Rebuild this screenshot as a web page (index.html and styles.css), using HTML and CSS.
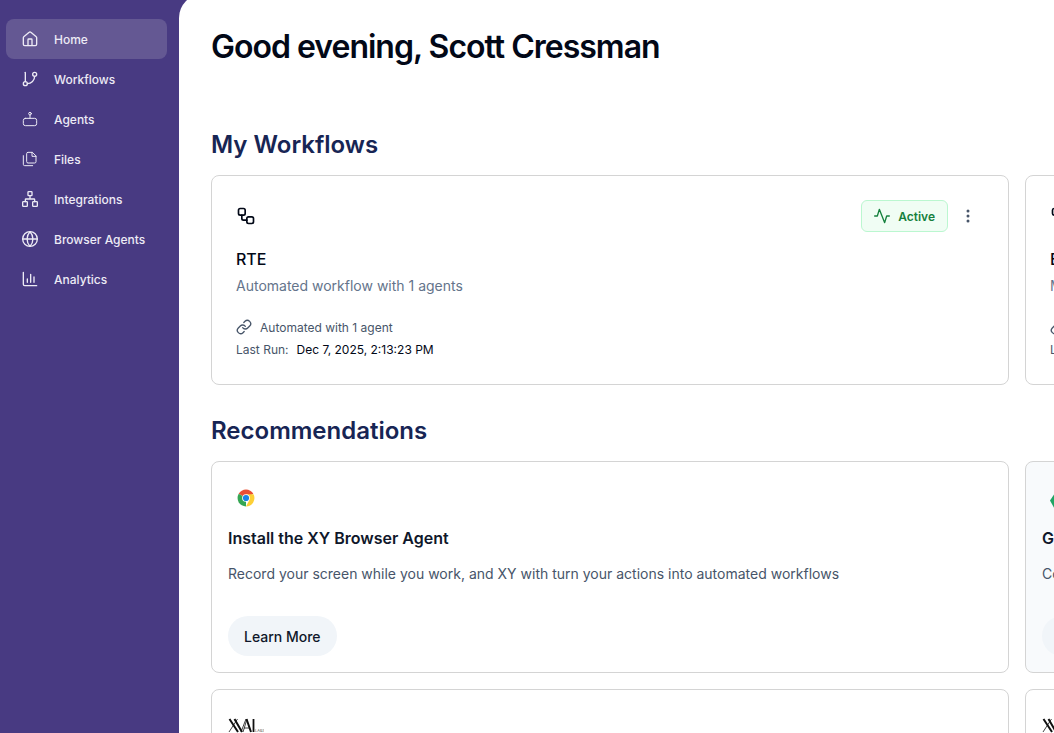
FILE: index.html
```html
<!DOCTYPE html>
<html lang="en">
<head>
    <meta charset="UTF-8">
    <meta name="viewport" content="width=device-width, initial-scale=1.0">
    <title>Home</title>
    <link rel="stylesheet" href="styles.css">
</head>
<body>
    <!-- Shared icons -->
    <svg class="sprite" aria-hidden="true">
        <symbol id="workflow" viewBox="0 0 24 24">
            <rect x="3" y="3" width="8" height="8" rx="2"/>
            <path d="M7 11v4a2 2 0 0 0 2 2h4"/>
            <rect x="13" y="13" width="8" height="8" rx="2"/>
        </symbol>
        <symbol id="link" viewBox="0 0 24 24">
            <path d="M10 13a5 5 0 0 0 7.54.54l3-3a5 5 0 0 0-7.07-7.07l-1.72 1.71"/>
            <path d="M14 11a5 5 0 0 0-7.54-.54l-3 3a5 5 0 0 0 7.07 7.07l1.71-1.71"/>
        </symbol>
        <symbol id="xyai" viewBox="0 0 36 16">
            <g fill="none" stroke="#111">
                <path d="M1.5 1L10 14M6.500 1L14 14M18.500 1L23 14" stroke-width="2"/>
                <path d="M9.500 1L1 14M18 1L13 14M19 1L15 14M16 10h6" stroke-width=".8"/>
                <path d="M25.500 1v13" stroke-width="1.800"/>
            </g>
            <text x="27" y="14" font-size="4" fill="#555">LABS</text>
        </symbol>
    </svg>

    <div class="layout">
        <nav class="sidebar">
            <a href="#" class="nav-item active">
                <svg class="icon" viewBox="0 0 24 24"><path d="M15 21v-8a1 1 0 0 0-1-1h-4a1 1 0 0 0-1 1v8"/><path d="M2 10a2 2 0 0 1 .7-1.5l8-6.500a2 2 0 0 1 2.600 0l8 6.500A2 2 0 0 1 22 10v10a2 2 0 0 1-2 2H4a2 2 0 0 1-2-2z"/></svg>
                Home
            </a>
            <a href="#" class="nav-item">
                <svg class="icon" viewBox="0 0 24 24"><path d="M5 2v14"/><circle cx="19" cy="5" r="3"/><circle cx="5" cy="19" r="3"/><path d="M19 8a11 11 0 0 1-11 11"/></svg>
                Workflows
            </a>
            <a href="#" class="nav-item">
                <svg class="icon thin" viewBox="0 0 24 24"><rect x="2" y="11" width="20" height="11" rx="3"/><circle cx="12" cy="4" r="2"/><path d="M12 6v5"/></svg>
                Agents
            </a>
            <a href="#" class="nav-item">
                <svg class="icon thin" viewBox="0 0 24 24"><path d="M15 2H9a2 2 0 0 0-2 2v12a2 2 0 0 0 2 2h10a2 2 0 0 0 2-2V8z"/><path d="M15 2v6h6"/><path d="M2 7v13a2 2 0 0 0 2 2h12"/></svg>
                Files
            </a>
            <a href="#" class="nav-item">
                <svg class="icon" viewBox="0 0 24 24"><rect x="16" y="16" width="7" height="7" rx="1"/><rect x="1" y="16" width="7" height="7" rx="1"/><rect x="9" y="1" width="6" height="6" rx="1"/><path d="M5 16v-3a1 1 0 0 1 1-1h12a1 1 0 0 1 1 1v3M12 12V7"/></svg>
                Integrations
            </a>
            <a href="#" class="nav-item">
                <svg class="icon" viewBox="0 0 24 24"><circle cx="12" cy="12" r="11"/><path d="M12 1a16 16 0 0 0 0 22 16 16 0 0 0 0-22M1 12h22"/></svg>
                Browser Agents
            </a>
            <a href="#" class="nav-item">
                <svg class="icon" viewBox="0 0 24 24"><path d="M2 2v18a2 2 0 0 0 2 2h18M8 17v-5M13 17V5M18 17V9"/></svg>
                Analytics
            </a>
        </nav>

        <main class="main">
            <h1>Good evening, Scott Cressman</h1>

            <section>
                <h2>My Workflows</h2>
                <div class="grid">
                    <article class="card workflow-card">
                        <div class="card-top">
                            <svg class="icon card-icon"><use href="#workflow"/></svg>
                            <div class="card-actions">
                                <span class="badge">
                                    <svg class="icon" viewBox="0 0 24 24"><path d="M23 12h-4l-3 10L8 2l-3 10H1"/></svg>
                                    Active
                                </span>
                                <button class="menu-button" aria-label="More options">
                                    <svg viewBox="0 0 16 16"><circle cx="8" cy="3" r="1.5"/><circle cx="8" cy="8" r="1.5"/><circle cx="8" cy="13" r="1.5"/></svg>
                                </button>
                            </div>
                        </div>
                        <h3>RTE</h3>
                        <p class="description">Automated workflow with 1 agents</p>
                        <p class="meta">
                            <svg class="icon"><use href="#link"/></svg>
                            Automated with 1 agent
                        </p>
                        <p class="meta">Last Run: <time>Dec 7, 2025, 2:13:23 PM</time></p>
                    </article>
                    <article class="card workflow-card">
                        <div class="card-top">
                            <svg class="icon card-icon"><use href="#workflow"/></svg>
                        </div>
                        <h3>E</h3>
                        <p class="description">M</p>
                        <p class="meta"><svg class="icon"><use href="#link"/></svg></p>
                        <p class="meta">Last Run:</p>
                    </article>
                </div>
            </section>

            <section>
                <h2>Recommendations</h2>
                <div class="grid">
                    <article class="card rec-card">
                        <svg class="rec-icon" viewBox="-1 -1 26 26">
                            <path d="M12 12L2.5 6.5A11 11 0 0 1 21.5 6.5z" fill="#ea4f33"/>
                            <path d="M12 12L12 23A11 11 0 0 1 2.5 6.5z" fill="#35a653"/>
                            <path d="M12 7h9.800a11 11 0 0 1-9.800 16l4.300-8.500z" fill="#fdd037"/>
                            <circle cx="12" cy="12" r="5" fill="#fff"/>
                            <circle cx="12" cy="12" r="4" fill="#1a84e5"/>
                        </svg>
                        <h3>Install the XY Browser Agent</h3>
                        <p>Record your screen while you work, and XY with turn your actions into automated workflows</p>
                        <button class="learn-button">Learn More</button>
                    </article>
                    <article class="card rec-card tinted">
                        <svg class="rec-icon" viewBox="0 0 24 24"><path d="M0 15L6 6h12l6 9-5 9H5z" fill="#20a464"/></svg>
                        <h3>G</h3>
                        <p>Co</p>
                        <button class="learn-button">Learn More</button>
                    </article>
                    <article class="card rec-card">
                        <svg class="brand"><use href="#xyai"/></svg>
                    </article>
                    <article class="card rec-card">
                        <svg class="brand"><use href="#xyai"/></svg>
                    </article>
                </div>
            </section>
        </main>
    </div>
</body>
</html>
```
FILE: styles.css
```css
* {
    box-sizing: border-box;
}

body {
    margin: 0;
    font-family: Inter, "Liberation Sans", sans-serif;
    color: #020817;
    background: #483a82;
    overflow: hidden;
}

h1, h2, h3, p {
    margin: 0;
}

.sprite {
    display: none;
}

.icon {
    width: 16px;
    height: 16px;
    flex-shrink: 0;
    fill: none;
    stroke: currentColor;
    stroke-width: 2;
    stroke-linecap: round;
    stroke-linejoin: round;
}

.icon.thin {
    stroke-width: 1.5;
}

.layout {
    display: flex;
    height: 100vh;
}

/* Sidebar */
.sidebar {
    width: 179px;
    flex-shrink: 0;
    padding: 19px 12px 0 6px;
}

.nav-item {
    display: flex;
    align-items: center;
    gap: 16px;
    height: 40px;
    padding: 0 16px;
    border-radius: 8px;
    color: #edebf5;
    font-size: 12px;
    font-weight: 500;
    text-decoration: none;
}

.nav-item.active {
    background: #645893;
}

/* Main content */
.main {
    flex: 1;
    min-width: 0;
    margin-top: -6px;
    padding: 33px 45px 0 32px;
    background: #fff;
    border-top-left-radius: 24px;
    overflow: hidden;
}

h1 {
    font-size: 32px;
    line-height: 40px;
    font-weight: 600;
    letter-spacing: -1px;
}

h2 {
    margin-bottom: 14px;
    color: #172554;
    font-size: 24px;
    line-height: 32px;
    font-weight: 600;
}

section {
    margin-top: 30px;
}

h1 + section {
    margin-top: 62px;
}

.grid {
    display: grid;
    grid-template-columns: 100% 100%;
    gap: 16px;
}

.card {
    background: #fff;
    border: 1px solid #d4d4d4;
    border-radius: 8px;
}

.workflow-card {
    padding: 24px;
}

.card-top {
    display: flex;
    align-items: center;
    justify-content: space-between;
    height: 32px;
    margin-bottom: 16px;
}

.card-icon {
    width: 20px;
    height: 20px;
}

.card-actions {
    display: flex;
    align-items: center;
    gap: 4px;
}

.badge {
    display: flex;
    align-items: center;
    gap: 8px;
    height: 32px;
    padding: 0 12px;
    border: 1px solid #bbf7d0;
    border-radius: 6px;
    background: #f0fdf4;
    color: #15803d;
    font-size: 12px;
    font-weight: 600;
}

.menu-button {
    width: 32px;
    height: 32px;
    padding: 8px;
    border: none;
    background: none;
    fill: #475569;
}

.menu-button svg {
    display: block;
    width: 16px;
    height: 16px;
}

.workflow-card h3 {
    font-size: 16px;
    line-height: 22px;
    font-weight: 500;
}

.description {
    margin: 6px 0 20px;
    color: #64748b;
    font-size: 14px;
    line-height: 20px;
}

.meta {
    display: flex;
    align-items: center;
    gap: 8px;
    height: 22px;
    color: #475569;
    font-size: 12px;
}

.meta time {
    color: #020817;
}

/* Recommendations */
.rec-card {
    min-height: 212px;
    padding: 24px 16px 16px;
}

.rec-card.tinted {
    background: #f8fafc;
}

.rec-icon {
    display: block;
    width: 20px;
    height: 20px;
    margin: 2px 8px 18px;
}

.rec-card h3 {
    color: #0f172a;
    font-size: 16px;
    line-height: 24px;
    font-weight: 600;
}

.rec-card p {
    margin: 14px 0 32px;
    color: #475569;
    font-size: 14px;
    line-height: 20px;
}

.learn-button {
    height: 40px;
    padding: 0 16px;
    border: none;
    border-radius: 20px;
    background: #f1f5f9;
    color: #0f172a;
    font: inherit;
    font-size: 14px;
    font-weight: 500;
}

.brand {
    display: block;
    width: 36px;
    height: 16px;
    margin-top: 4px;
}
```
